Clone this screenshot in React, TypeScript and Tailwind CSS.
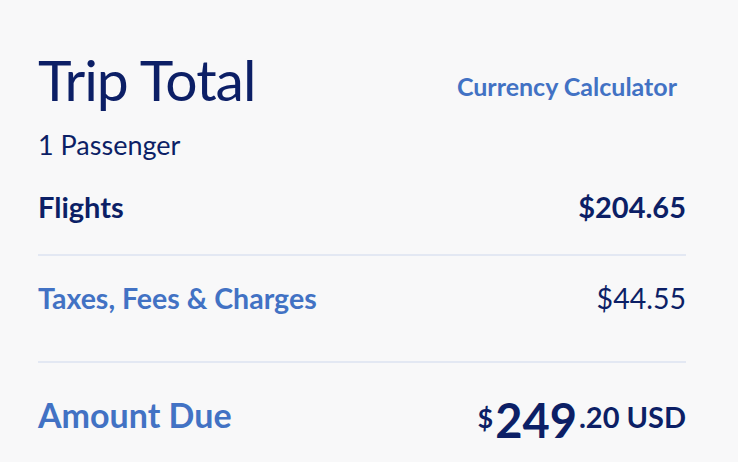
import React from 'react';

// Trip total summary card
const NAVY = 'text-[#0c1f66]';
const BLUE = 'text-[#4272c4]';

export default function App() {
  return (
    <div className="min-h-screen w-full bg-[#f8f8f9] pl-[38px] pr-[52px] pt-[51px] font-['Lato','Open_Sans',sans-serif]">
      {/* Header */}
      <div className="flex items-start justify-between">
        <div>
          <h1 className={`text-[57px] leading-none font-normal tracking-[-1px] ${NAVY}`}>Trip Total</h1>
          <p className={`mt-[23px] text-[27px] leading-none ${NAVY}`}>1 Passenger</p>
        </div>
        <a className={`mt-[23px] mr-[9px] text-[25px] leading-none font-bold ${BLUE}`}>Currency Calculator</a>
      </div>

      {/* Flights */}
      <div className="mt-[34px] flex items-baseline justify-between">
        <span className={`text-[29px] leading-none font-bold ${NAVY}`}>Flights</span>
        <span className={`text-[29px] leading-none font-bold ${NAVY}`}>$204.65</span>
      </div>

      <div className="mt-[33px] h-[2px] bg-[#e3e8f3]" />

      {/* Taxes */}
      <div className="mt-[28px] flex items-baseline justify-between">
        <span className={`text-[28.5px] leading-none font-bold ${BLUE}`}>Taxes, Fees &amp; Charges</span>
        <span className={`text-[28.5px] leading-none ${NAVY}`}>$44.55</span>
      </div>

      <div className="mt-[48px] h-[2px] bg-[#e3e8f3]" />

      {/* Amount due */}
      <div className="mt-[24px] flex items-baseline justify-between">
        <span className={`text-[34px] leading-none font-bold ${BLUE}`}>Amount Due</span>
        <span className={`text-[29px] leading-none font-bold ${NAVY}`}>
          <span className="text-[27px]">$</span>
          <span className="relative top-[10px] ml-[2px] text-[47px] leading-none">249</span>
          <span className="ml-[2px]">.20 USD</span>
        </span>
      </div>
    </div>
  );
}
